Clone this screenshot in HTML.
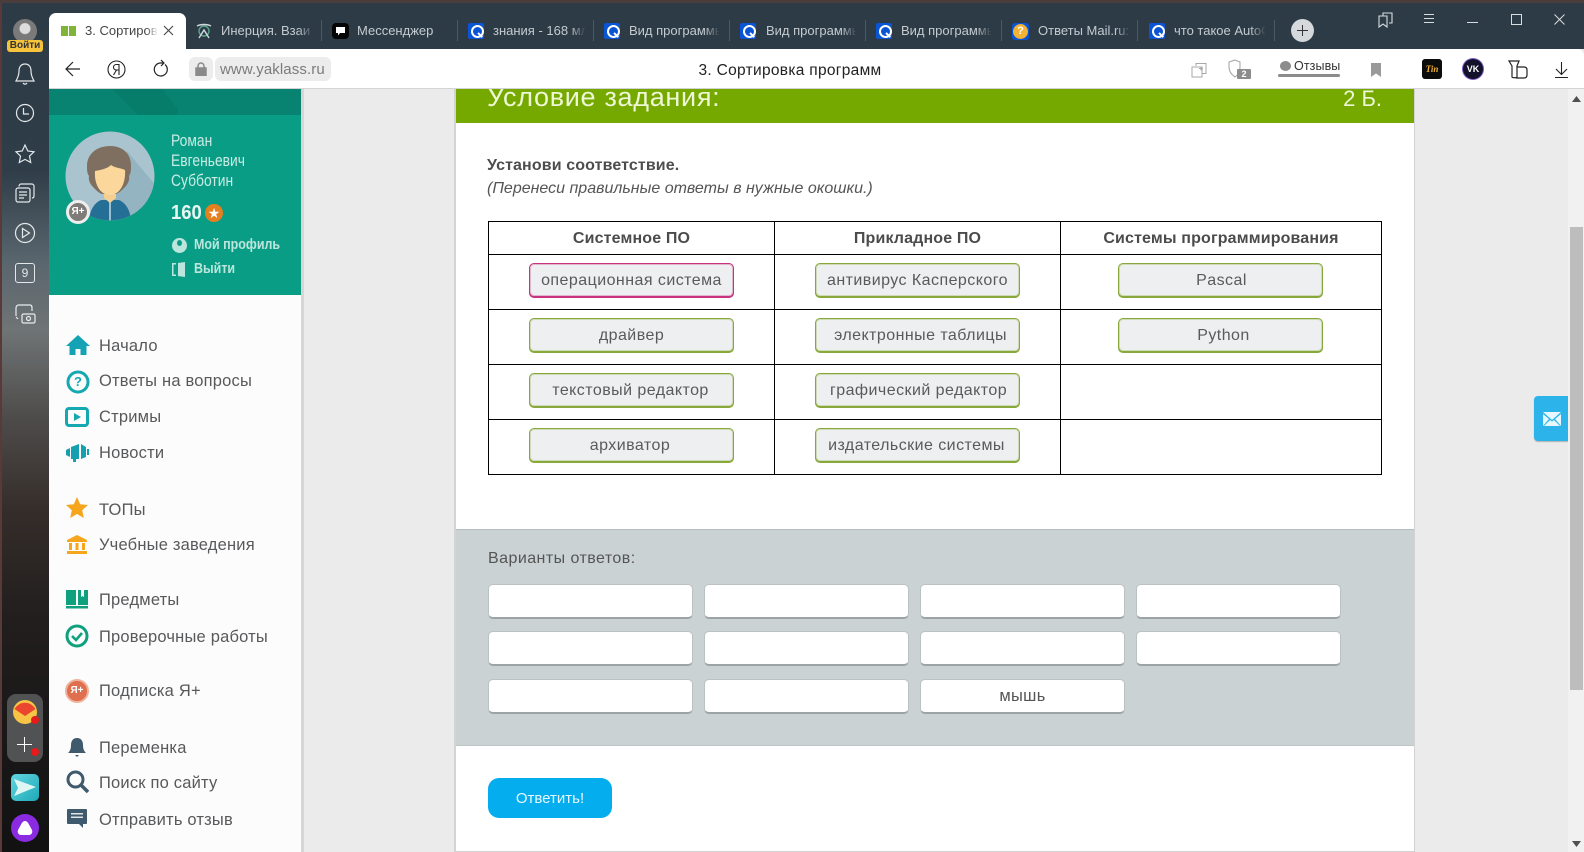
<!DOCTYPE html>
<html lang="ru"><head><meta charset="utf-8"><title>3. Сортировка программ</title>
<style>
*{box-sizing:border-box}
html,body{margin:0;padding:0;width:1584px;height:852px;overflow:hidden;background:#ebebeb;font-family:"Liberation Sans",sans-serif}
.a,.t,svg{position:absolute}
.t{white-space:nowrap;line-height:20px}
.tab{font-size:13px;color:#c4cbd0;top:21px;overflow:hidden}
.fade{position:absolute;top:20px;width:16px;height:22px;background:linear-gradient(90deg,rgba(45,59,70,0),#2d3b46)}
.sep{position:absolute;top:20px;width:1px;height:21px;background:#4a5965}
.q{position:absolute;top:23px;width:16px;height:16px;background:#0a55d4;border-radius:2px}
.q:after{content:"";position:absolute;left:3px;top:2px;width:9px;height:9px;border:2px solid #fff;border-radius:50%}
.q:before{content:"";position:absolute;left:9px;top:11px;width:6px;height:2.4px;background:#fff;transform:rotate(45deg)}
.n{left:99px;font-size:16.5px;color:#58595b;letter-spacing:.2px}
.b{position:absolute;width:205px;height:34px;background:#eeeff0;border:1px solid #89a83c;border-radius:5px;color:#5a5a5a;font-size:16px;line-height:34px;text-align:center;box-shadow:0 1px 0 #89a83c,inset 0 0 0 1px rgba(137,168,60,.3);letter-spacing:.45px}
.o{position:absolute;width:205px;height:35px;background:#fff;border-radius:5px;border:1px solid #bcc2c3;border-bottom:2px solid #9da3a4;color:#555;font-size:16.5px;line-height:33px;text-align:center;letter-spacing:.3px}
.l{position:absolute;background:#000}
.h{position:absolute;top:229px;font-size:16px;font-weight:bold;color:#4b4b4b;text-align:center;line-height:20px;letter-spacing:.15px}
</style></head><body>

<!-- left bar -->
<div class="a" style="left:0;top:0;width:49px;height:852px;background:linear-gradient(#2d3b46 0,#2f3d48 170px,#59656d 260px,#6f7475 330px,#4d4b4a 420px,#352d2a 510px,#211e1d 620px,#121212 852px);border-left:2px solid #5a3a38"></div>

<!-- tab strip -->
<div class="a" style="left:49px;top:0;width:1535px;height:49px;background:#2d3b46"></div>
<div class="a" style="left:0;top:0;width:1584px;height:3px;background:#4a3d3c"></div>
<div class="a" style="left:49px;top:13px;width:137px;height:36px;background:#fff;border-radius:7px 7px 0 0"></div>
<div class="a" style="left:61px;top:26px;width:7px;height:10px;background:#7fb439"></div>
<div class="a" style="left:69px;top:26px;width:7px;height:10px;background:#7fb439"></div>
<div class="t" style="left:85px;top:21px;font-size:13px;color:#444;width:72px;overflow:hidden">3. Сортировка</div>
<div class="a" style="left:146px;top:20px;width:12px;height:22px;background:linear-gradient(90deg,rgba(255,255,255,0),#fff)"></div>
<svg style="left:163px;top:25px" width="11" height="11" viewBox="0 0 11 11"><path d="M1 1L10 10M10 1L1 10" stroke="#444" stroke-width="1.1"/></svg>

<svg style="left:195px;top:23px" width="18" height="17" viewBox="0 0 18 17" fill="none"><circle cx="9" cy="8" r="5" stroke="#5aa58c" stroke-width="1.4"/><path d="M2 3c4-2 10-2 14 0M4 15l5-8 5 8" stroke="#cfd8de" stroke-width="1.4"/></svg>
<div class="tab t" style="left:221px;width:90px">Инерция. Взаимо</div><div class="fade" style="left:298px"></div><div class="sep" style="left:321px"></div>
<div class="a" style="left:332px;top:23px;width:17px;height:16px;background:#050505;border-radius:4px"></div>
<svg style="left:335px;top:26px" width="11" height="11" viewBox="0 0 11 11"><path d="M1 1h9v6H5L3 9.500V7H1z" fill="#fff"/></svg>
<div class="tab t" style="left:357px">Мессенджер</div><div class="sep" style="left:457px"></div>
<div class="q" style="left:468px"></div><div class="tab t" style="left:493px;width:92px">знания - 168 млн</div><div class="fade" style="left:570px"></div><div class="sep" style="left:593px"></div>
<div class="q" style="left:604px"></div><div class="tab t" style="left:629px;width:90px">Вид программы</div><div class="fade" style="left:704px"></div><div class="sep" style="left:729px"></div>
<div class="q" style="left:740px"></div><div class="tab t" style="left:766px;width:90px">Вид программы</div><div class="fade" style="left:841px"></div><div class="sep" style="left:865px"></div>
<div class="q" style="left:876px"></div><div class="tab t" style="left:901px;width:90px">Вид программы</div><div class="fade" style="left:976px"></div><div class="sep" style="left:1001px"></div>
<div class="a" style="left:1012px;top:23px;width:17px;height:17px;background:#0a55d4;border-radius:3px"></div><div class="a" style="left:1013px;top:24px;width:15px;height:15px;background:#f2b233;border-radius:50%;color:#fff;font-size:11px;font-weight:bold;text-align:center;line-height:15px">?</div>
<div class="tab t" style="left:1038px;width:90px">Ответы Mail.ru: </div><div class="fade" style="left:1115px"></div><div class="sep" style="left:1137px"></div>
<div class="q" style="left:1149px"></div><div class="tab t" style="left:1174px;width:91px">что такое AutoCAD</div><div class="fade" style="left:1250px"></div><div class="sep" style="left:1274px"></div>
<div class="a" style="left:1291px;top:19px;width:23px;height:23px;background:#d5d9dc;border-radius:50%"></div>
<svg style="left:1296px;top:24px" width="13" height="13" viewBox="0 0 13 13"><path d="M6.500 1v11M1 6.500h11" stroke="#333" stroke-width="1"/></svg>

<svg style="left:1377px;top:11px" width="17" height="17" viewBox="0 0 17 17" fill="none" stroke="#d8dde0" stroke-width="1.100"><path d="M2 5h8v11l-4-3-4 3zM6 5V2h9v10h-3"/></svg>
<svg style="left:1423px;top:13px" width="12" height="11" viewBox="0 0 12 11" stroke="#d8dde0"><path d="M1 1.500h10M1 5.500h10M1 9.500h10"/></svg>
<svg style="left:1467px;top:21px" width="11" height="3" viewBox="0 0 11 3" stroke="#d8dde0"><path d="M0 1.500h11"/></svg>
<svg style="left:1511px;top:14px" width="11" height="11" viewBox="0 0 11 11" fill="none" stroke="#d8dde0"><path d="M.5.500h10v10H.5z"/></svg>
<svg style="left:1554px;top:14px" width="11" height="11" viewBox="0 0 11 11" stroke="#d8dde0"><path d="M.5.500l10 10M10.500.500l-10 10"/></svg>

<!-- left bar icons -->
<div class="a" style="left:13px;top:19px;width:24px;height:24px;background:radial-gradient(circle at 50% 40%,#ddd 0 5px,#7a7a7a 6px);border-radius:50%"></div>
<div class="a" style="left:7px;top:40px;width:36px;height:12px;background:#f5c43c;border-radius:3px;color:#333;font-size:10px;font-weight:bold;text-align:center;line-height:12px">Войти</div>
<svg style="left:14px;top:62px" width="22" height="24" viewBox="0 0 22 24" fill="none" stroke="#e4e8ea" stroke-width="1.200"><path d="M11 2c-4 0-6 3-6 7 0 5-2 8-3 10h18c-1-2-3-5-3-10 0-4-2-7-6-7zM9 21c1 1.500 3 1.500 4 0"/></svg>
<svg style="left:15px;top:103px" width="20" height="20" viewBox="0 0 20 20" fill="none" stroke="#e4e8ea" stroke-width="1.200"><circle cx="10" cy="10" r="8.500"/><path d="M8.500 5v6H14"/></svg>
<svg style="left:14px;top:143px" width="22" height="22" viewBox="0 0 22 22" fill="none" stroke="#e4e8ea" stroke-width="1.200"><path d="M11 2l2.800 6 6.200.8-4.500 4.300 1.200 6.400L11 16.400 5.300 19.500l1.200-6.400L2 8.800 8.200 8z"/></svg>
<svg style="left:15px;top:183px" width="20" height="20" viewBox="0 0 20 20" fill="none" stroke="#e4e8ea" stroke-width="1.200"><rect x="1" y="5" width="14" height="14" rx="2"/><path d="M4 3.500C4 2 5 1 6 1h11c1 0 2 1 2 2v10c0 1-.5 2-2 2M4 9h8M4 12h8M4 15h5"/></svg>
<svg style="left:14px;top:222px" width="22" height="22" viewBox="0 0 22 22" fill="none" stroke="#e4e8ea" stroke-width="1.200"><circle cx="11" cy="11" r="9.500"/><path d="M8.500 6.500v9l7-4.500z"/></svg>
<div class="a" style="left:15px;top:263px;width:20px;height:20px;border:1.200px solid #e4e8ea;border-radius:3px;color:#e4e8ea;font-size:12px;text-align:center;line-height:18px">9</div>
<svg style="left:15px;top:304px" width="21" height="21" viewBox="0 0 21 21" fill="none" stroke="#e8ecee" stroke-width="1.200"><path d="M1 12V4c0-1.500 1-3 3-3h11c1.500 0 2 1.500 2 3v3M1 13l2 2"/><rect x="7" y="10" width="13" height="9" rx="1.500" fill="#6f7475"/><circle cx="13.500" cy="14.500" r="2"/></svg>

<div class="a" style="left:7px;top:694px;width:36px;height:68px;background:#505254;border-radius:9px"></div>
<div class="a" style="left:13px;top:700px;width:24px;height:24px;border-radius:50%;background:#f7c445"></div>
<svg style="left:13px;top:700px" width="24" height="24" viewBox="0 0 24 24"><path d="M1.500 9A12 12 0 0 1 22.500 9L12 16z" fill="#e9452f"/></svg>
<div class="a" style="left:31px;top:716px;width:8px;height:8px;border-radius:50%;background:#e61a1a"></div>
<svg style="left:17px;top:737px" width="15" height="15" viewBox="0 0 15 15" stroke="#fff"><path d="M7.500 0v15M0 7.500h15"/></svg>
<div class="a" style="left:31px;top:748px;width:8px;height:8px;border-radius:50%;background:#e61a1a"></div>
<div class="a" style="left:11px;top:774px;width:28px;height:27px;background:linear-gradient(135deg,#61d6e0,#1fa9b8);border-radius:5px"></div>
<svg style="left:14px;top:779px" width="22" height="17" viewBox="0 0 22 17"><path d="M0 0l22 8L0 17l4-8z" fill="#dff6f5"/></svg>
<div class="a" style="left:11px;top:814px;width:28px;height:28px;background:#8a2be2;border-radius:50%"></div>
<svg style="left:17px;top:821px" width="16" height="14" viewBox="0 0 16 14"><path d="M8 0c3 0 4 4 7 9 1 3-1 5-3 5H4C2 14 0 12 1 9c3-5 4-9 7-9z" fill="#fff"/></svg>

<!-- address bar -->
<div class="a" style="left:49px;top:49px;width:1535px;height:40px;background:#fff;border-bottom:1px solid #d4d4d4;border-top-right-radius:7px"></div>
<svg style="left:65px;top:60px" width="16" height="18" viewBox="0 0 16 18" fill="none" stroke="#222" stroke-width="1.200"><path d="M15 9H1M8 2L1 9l7 7"/></svg>
<svg style="left:107px;top:60px" width="19" height="19" viewBox="0 0 19 19" fill="none" stroke="#222" stroke-width="1.100"><circle cx="9.500" cy="9.500" r="8.500"/><path d="M12 15V4.500H9.500c-4 0-4 5.500 0 5.500H12M9.500 10L6.500 15"/></svg>
<svg style="left:153px;top:59px" width="16" height="20" viewBox="0 0 16 20" fill="none" stroke="#222" stroke-width="1.200"><path d="M12 5.500a6.500 6.500 0 1 1-5-1.500h3M8 1l3 3-3 3"/></svg>
<div class="a" style="left:189px;top:57px;width:24px;height:24px;background:#ececec;border-radius:6px"></div>
<svg style="left:195px;top:62px" width="12" height="14" viewBox="0 0 12 14"><path d="M1 6h10v8H1zM3 6V4a3 3 0 0 1 6 0v2" fill="none" stroke="#8a8a8a" stroke-width="1.500"/><path d="M1 6h10v8H1z" fill="#8a8a8a"/></svg>
<div class="a" style="left:215px;top:57px;width:116px;height:24px;background:#ececec;border-radius:6px"></div>
<div class="t" style="left:220px;top:60px;font-size:15px;color:#7b7b7b;letter-spacing:.1px">www.yaklass.ru</div>
<div class="t" style="left:590px;width:400px;top:61px;font-size:15.500px;color:#222;text-align:center;letter-spacing:.3px">3. Сортировка программ</div>

<svg style="left:1191px;top:62px" width="16" height="16" viewBox="0 0 16 16" fill="none" stroke="#a8a8a8"><path d="M5 4V1.500h10v10H11M1 5h10v10H1zM10 4.500v4M8 6.500h4"/></svg>
<svg style="left:1227px;top:59px" width="24" height="23" viewBox="0 0 24 23"><path d="M8 1l5 2v5c0 5-2 8-5 10-3-2-6-5-6-10V3z" fill="none" stroke="#a8a8a8" stroke-width="1.100"/><rect x="10" y="10" width="14" height="10" rx="1" fill="#8c8c8c"/></svg>
<div class="t" style="left:1237px;top:69px;width:14px;font-size:9px;line-height:11px;font-weight:bold;color:#fff;text-align:center">2</div>
<div class="a" style="left:1280px;top:61px;width:11px;height:10px;background:#8c8c8c;border-radius:50%"></div>
<div class="t" style="left:1294px;top:56px;font-size:12.500px;color:#333;letter-spacing:.1px">Отзывы</div>
<div class="a" style="left:1278px;top:74px;width:62px;height:3px;background:#8c8c8c;border-radius:2px"></div>
<svg style="left:1371px;top:63px" width="10" height="14" viewBox="0 0 10 14"><path d="M0 0h10v14L5 10.500 0 14z" fill="#9a9a9a"/></svg>
<div class="a" style="left:1422px;top:59px;width:20px;height:20px;background:#0c0c0c;border-radius:3px;color:#f2b233;font:italic bold 9px/20px 'Liberation Serif',serif;text-align:center">Tin</div>
<div class="a" style="left:1463px;top:59px;width:20px;height:20px;background:#12122a;border-radius:50%;box-shadow:0 0 0 1px #7c5cc4;color:#fff;font-size:9px;font-weight:bold;text-align:center;line-height:20px">VK</div>
<svg style="left:1507px;top:60px" width="21" height="19" viewBox="0 0 21 19" fill="none" stroke="#222" stroke-width="1.200"><path d="M2 1h10l-2 5v11c0 1-5 1-5 0V6zM10 7h7c2 0 3 1 3 3v5c0 2-1 3-3 3H9"/></svg>
<svg style="left:1555px;top:62px" width="13" height="16" viewBox="0 0 13 16" fill="none" stroke="#222" stroke-width="1.100"><path d="M6.500 0v12M1 7l5.500 5.500L12 7M0 15.500h13"/></svg>

<!-- sidebar -->
<div class="a" style="left:49px;top:89px;width:255px;height:763px;background:#fcfcfc;border-right:3px solid #d6d6d6"></div>
<div class="a" style="left:49px;top:89px;width:252px;height:206px;background:#0a9d85"></div>
<div class="a" style="left:49px;top:89px;width:252px;height:26px;background:#088371"></div>
<svg style="left:108px;top:89px" width="70" height="26" viewBox="0 0 70 26"><path d="M4 0h50l20 26H30z" fill="#067a69" opacity=".65"/></svg>

<svg style="left:65px;top:131px" width="90" height="92" viewBox="0 0 90 92">
<defs><clipPath id="c"><circle cx="45" cy="45" r="44.500"/></clipPath></defs>
<circle cx="45" cy="45" r="44.500" fill="#a9c4cf"/>
<g clip-path="url(#c)"><path d="M62 20l30 36v40H40z" fill="#95b4c2"/>
<path d="M24 92c0-12 5-20 12-23h18c7 3 12 11 12 23z" fill="#256f96"/>
<path d="M44 66h2v26h-2z" fill="#9ac0d0"/></g>
<path d="M39 58h12v9l-6 5-6-5z" fill="#f5cf91"/>
<path d="M45 15c12 0 21 7 21 20 0 4 0 7-2 10 1 5-2 9-5 12-3 3-5 5-8 6H37c-3-1-5-3-8-6-3-3-6-7-5-12-2-3-2-6-2-10 0-13 11-20 23-20z" fill="#7f6f60"/>
<path d="M30 40c5-1 12-2 16-6 4 3 10 3 14 5 1 13-5 25-15 25S29 53 30 40z" fill="#fbd79c"/>
</svg>
<div class="a" style="left:66px;top:200px;width:24px;height:24px;background:#7e7b78;border:3px solid #eee;border-radius:50%;color:#fff;font-size:10px;font-weight:bold;text-align:center;line-height:18px">Я+</div>
<div class="t" style="left:171px;top:131px;font-size:16.500px;line-height:20px;color:#c8ebe4;transform:scaleX(.84);transform-origin:0 0">Роман<br>Евгеньевич<br>Субботин</div>
<div class="t" style="left:171px;top:203px;font-size:20px;font-weight:bold;color:#e9f7f4;transform:scaleX(.92);transform-origin:0 0">160</div>
<div class="a" style="left:205px;top:204px;width:18px;height:18px;background:#e5801e;border-radius:50%;color:#fff;font-size:14px;text-align:center;line-height:18px">★</div>
<div class="a" style="left:172px;top:238px;width:15px;height:15px;background:#bce6dd;border-radius:50%"></div>
<div class="a" style="left:177px;top:240px;width:5px;height:6px;background:#0a9d85;border-radius:50%"></div>
<div class="t" style="left:194px;top:235px;font-size:14.500px;font-weight:bold;color:#bce6dd;transform:scaleX(.86);transform-origin:0 0">Мой профиль</div>
<svg style="left:172px;top:262px" width="14" height="15" viewBox="0 0 14 15" fill="#bce6dd"><path d="M0 1h4v1.500H1.500v10H4V14H0zM6 1l7-1v15l-7-1z"/></svg>
<div class="t" style="left:194px;top:259px;font-size:14.500px;font-weight:bold;color:#bce6dd;transform:scaleX(.86);transform-origin:0 0">Выйти</div>

<!-- nav icons -->
<svg style="left:66px;top:334px" width="24" height="22" viewBox="0 0 24 22"><path d="M12 1L0 12h3.500v9h6v-6h5v6h6v-9H24z" fill="#14a3b5"/></svg>
<svg style="left:66px;top:370px" width="24" height="24" viewBox="0 0 24 24" fill="none"><circle cx="12" cy="12" r="10" stroke="#14a8b0" stroke-width="3"/></svg>
<div class="t" style="left:66px;top:372px;width:24px;text-align:center;font-size:13px;font-weight:bold;color:#14a8b0">?</div>
<svg style="left:65px;top:407px" width="24" height="20" viewBox="0 0 24 20"><rect x="1.500" y="1.500" width="21" height="17" rx="2.500" fill="none" stroke="#14a8b0" stroke-width="3"/><path d="M9 6v8l7-4z" fill="#14a8b0"/></svg>
<svg style="left:66px;top:444px" width="23" height="18" viewBox="0 0 23 18" fill="#14a0b0"><path d="M0 6l4-2v9l-4-2zM5 3l8-3v15l-3 0v3H7v-3H5zM15 0l5 3v10l-5 2zM21 5h2v6h-2z"/></svg>
<svg style="left:66px;top:497px" width="22" height="22" viewBox="0 0 22 22"><path d="M11 0l3.200 7.200L22 8l-5.800 5.200L17.800 21 11 17l-6.800 4 1.600-7.800L0 8l7.800-.8z" fill="#f5a61d"/></svg>
<svg style="left:66px;top:535px" width="22" height="20" viewBox="0 0 22 20" fill="#f5a61d"><path d="M11 0l10 5v2H1V5zM3 8h3v7H3zM9.500 8h3v7h-3zM16 8h3v7h-3zM1 16h20v3H1z"/></svg>
<svg style="left:66px;top:590px" width="22" height="19" viewBox="0 0 22 19" fill="#0fa07e"><path d="M0 0h10v15H0zM12 0h3v7l1.500-1L18 7V0h4v15H12zM0 16h22v2.500H0z"/></svg>
<svg style="left:65px;top:624px" width="24" height="24" viewBox="0 0 24 24" fill="none" stroke="#0fa07e"><circle cx="12" cy="12" r="10" stroke-width="3"/><path d="M7 12l4 4 6-7" stroke-width="2.600"/></svg>
<div class="a" style="left:65px;top:679px;width:24px;height:24px;background:#df6f4e;border-radius:50%;border:2px solid #efb39c;box-shadow:inset 0 0 0 1px #df6f4e;color:#fff;font-size:10px;font-weight:bold;text-align:center;line-height:20px">Я+</div>
<svg style="left:68px;top:738px" width="18" height="19" viewBox="0 0 18 19" fill="#3f5a6d"><path d="M9 0c4 0 6 3 6 7 0 4 1 6 3 8H0c2-2 3-4 3-8 0-4 2-7 6-7zM7 17h4l-2 2z"/></svg>
<svg style="left:66px;top:770px" width="23" height="24" viewBox="0 0 23 24" fill="none" stroke="#3f5a6d"><circle cx="9.500" cy="9.500" r="7.500" stroke-width="3"/><path d="M15 15l7 7" stroke-width="3.500"/></svg>
<svg style="left:67px;top:809px" width="20" height="20" viewBox="0 0 20 20"><path d="M1 0h18c.6 0 1 .4 1 1v13c0 .6-.4 1-1 1h-3v4l-4-4H1c-.6 0-1-.4-1-1V1c0-.6.4-1 1-1z" fill="#3f5a6d"/><path d="M4 4h12v1.500H4zM4 7.500h12V9H4z" fill="#dfe5e8"/></svg>

<div class="t n" style="top:336px">Начало</div>
<div class="t n" style="top:371px">Ответы на вопросы</div>
<div class="t n" style="top:407px">Стримы</div>
<div class="t n" style="top:443px">Новости</div>
<div class="t n" style="top:500px">ТОПы</div>
<div class="t n" style="top:535px">Учебные заведения</div>
<div class="t n" style="top:590px">Предметы</div>
<div class="t n" style="top:627px">Проверочные работы</div>
<div class="t n" style="top:681px">Подписка Я+</div>
<div class="t n" style="top:738px">Переменка</div>
<div class="t n" style="top:773px">Поиск по сайту</div>
<div class="t n" style="top:810px">Отправить отзыв</div>

<!-- main panel -->
<div class="a" style="left:454px;top:89px;width:961px;height:763px;background:#fff;border-left:2px solid #d3d3d3;border-right:1px solid #d3d3d3"></div>
<div class="a" style="left:456px;top:89px;width:958px;height:34px;background:#76a900"></div>
<div class="a" style="left:456px;top:89px;width:958px;height:34px;overflow:hidden"><div class="t" style="left:31px;top:-7px;font-size:27px;line-height:30px;color:#eef7d6;letter-spacing:.7px">Условие задания:</div>
<div class="t" style="right:32px;top:-5px;font-size:22px;line-height:30px;color:#eef7d6">2 Б.</div></div>
<div class="t" style="left:487px;top:156px;font-size:16px;font-weight:bold;color:#4d4d4d;letter-spacing:.12px">Установи соответствие.</div>
<div class="t" style="left:487px;top:179px;font-size:16px;font-style:italic;color:#555;letter-spacing:0">(Перенеси правильные ответы в нужные окошки.)</div>

<!-- table -->
<div class="l" style="left:488px;top:221px;width:894px;height:1px"></div>
<div class="l" style="left:488px;top:254px;width:894px;height:1px"></div>
<div class="l" style="left:488px;top:309px;width:894px;height:1px"></div>
<div class="l" style="left:488px;top:364px;width:894px;height:1px"></div>
<div class="l" style="left:488px;top:419px;width:894px;height:1px"></div>
<div class="l" style="left:488px;top:474px;width:894px;height:1px"></div>
<div class="l" style="left:488px;top:221px;width:1px;height:254px"></div>
<div class="l" style="left:774px;top:221px;width:1px;height:254px"></div>
<div class="l" style="left:1060px;top:221px;width:1px;height:254px"></div>
<div class="l" style="left:1381px;top:221px;width:1px;height:254px"></div>
<div class="h" style="left:489px;width:285px">Системное ПО</div>
<div class="h" style="left:775px;width:285px">Прикладное ПО</div>
<div class="h" style="left:1061px;width:320px">Системы программирования</div>

<div class="b" style="left:529px;top:263px;border-color:#c8327e;box-shadow:0 1px 0 #c8327e,inset 0 0 0 1px rgba(200,50,126,.3)">операционная система</div>
<div class="b" style="left:815px;top:263px">антивирус Касперского</div>
<div class="b" style="left:1118px;top:263px;padding-left:2px">Pascal</div>
<div class="b" style="left:529px;top:318px">драйвер</div>
<div class="b" style="left:815px;top:318px;padding-left:6px">электронные таблицы</div>
<div class="b" style="left:1118px;top:318px;padding-left:6px">Python</div>
<div class="b" style="left:529px;top:373px;padding-right:2px">текстовый редактор</div>
<div class="b" style="left:815px;top:373px;padding-left:2px">графический редактор</div>
<div class="b" style="left:529px;top:428px;padding-right:3px">архиватор</div>
<div class="b" style="left:815px;top:428px;padding-right:2px">издательские системы</div>

<!-- answers -->
<div class="a" style="left:456px;top:529px;width:958px;height:217px;background:#cad2d3;border-top:1px solid #b4bcbd;border-bottom:1px solid #c0c6c7"></div>
<div class="t" style="left:488px;top:549px;font-size:16px;color:#555;letter-spacing:.45px">Варианты ответов:</div>
<div class="o" style="left:488px;top:584px"></div><div class="o" style="left:704px;top:584px"></div><div class="o" style="left:920px;top:584px"></div><div class="o" style="left:1136px;top:584px"></div>
<div class="o" style="left:488px;top:631px"></div><div class="o" style="left:704px;top:631px"></div><div class="o" style="left:920px;top:631px"></div><div class="o" style="left:1136px;top:631px"></div>
<div class="o" style="left:488px;top:679px"></div><div class="o" style="left:704px;top:679px"></div><div class="o" style="left:920px;top:679px">мышь</div>

<div class="a" style="left:488px;top:778px;width:124px;height:40px;background:#04aeee;border-radius:11px;color:#e8f8ff;font-size:15px;text-align:center;line-height:41px">Ответить!</div>
<div class="a" style="left:456px;top:851px;width:958px;height:1px;background:#d3d3d3"></div>

<!-- right -->
<div class="a" style="left:1534px;top:396px;width:34px;height:45px;background:#2bb3ea;border-radius:4px 0 0 4px;box-shadow:0 1px 1px rgba(0,0,0,.25)"></div>
<svg style="left:1543px;top:412px" width="18" height="14" viewBox="0 0 18 14"><path d="M0 0h18L9 8zM0 2v12l6-7zM18 2v12l-6-7zM1 14l6-6 2 1.500 2-1.500 6 6z" fill="#e6f8fd"/></svg>
<div class="a" style="left:1568px;top:89px;width:16px;height:763px;background:#f1f1f1"></div>
<div class="a" style="left:1570px;top:227px;width:13px;height:463px;background:#bdbdbd"></div>
<svg style="left:1572px;top:96px" width="9" height="6" viewBox="0 0 9 6"><path d="M0 6l4.500-6L9 6z" fill="#505050"/></svg>
<svg style="left:1572px;top:841px" width="9" height="6" viewBox="0 0 9 6"><path d="M0 0l4.500 6L9 0z" fill="#505050"/></svg>
</body></html>
